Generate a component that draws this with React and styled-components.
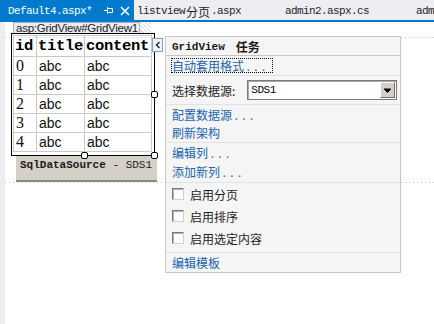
import React from 'react'
import styled, { createGlobalStyle } from 'styled-components'

const GlobalStyle = createGlobalStyle`
  html, body {
    margin: 0;
    padding: 0;
    background: #fff;
  }
  body {
    overflow: hidden;
  }
`;

const cjk = `"Noto Sans CJK SC", "Noto Sans", sans-serif`;
const mono = `"Liberation Mono", "Noto Sans CJK SC", monospace`;

const rows = [0, 1, 2, 3, 4];

const PinIcon = () => (
  <svg width="10" height="9" viewBox="0 0 10 9">
    <path d="M0 4.5h3.5M3.5 1v7M3.5 2.5h5v4h-5" fill="none" stroke="#fff" strokeWidth="1" />
  </svg>
);

const CloseIcon = () => (
  <svg width="10" height="10" viewBox="0 0 10 10">
    <path d="M1 1l8 8M9 1l-8 8" stroke="#fff" strokeWidth="1.6" />
  </svg>
);

const App = () => {
  return (
    <Frame>
      <GlobalStyle />
      <TabBar>
        <Tab $active $w={134} $pad={8}>
          Default4.aspx*
          <TabIcon $ml={12}><PinIcon /></TabIcon>
          <TabIcon $ml={6}><CloseIcon /></TabIcon>
        </Tab>
        <Tab $w={148} $pad={3}>
          listview<Cjk>分页</Cjk>.aspx
        </Tab>
        <Tab $w={128} $pad={3}>admin2.aspx.cs</Tab>
        <Tab $w={40} $pad={6}>admin</Tab>
      </TabBar>

      <Body>
        <Gutter />
        <Canvas>
          <TagRow>
            <TagLabel>asp:GridView#GridView1</TagLabel>
            <Hatch />
          </TagRow>
          <Surface>
            <Control>
              <GridFrame>
                <Table>
                  <colgroup>
                    <col style={{ width: 23 }} />
                    <col style={{ width: 48 }} />
                    <col style={{ width: 67 }} />
                  </colgroup>
                  <thead>
                    <tr>
                      <Th>id</Th>
                      <Th>title</Th>
                      <Th>content</Th>
                    </tr>
                  </thead>
                  <tbody>
                    {rows.map((n) => (
                      <tr key={n}>
                        <Td $num>{n}</Td>
                        <Td>abc</Td>
                        <Td>abc</Td>
                      </tr>
                    ))}
                  </tbody>
                </Table>
              </GridFrame>
              <Handle $x={143} $y={61} />
              <Handle $x={73} $y={122} />
              <Handle $x={143} $y={122} />
              <SmartTag>
                <svg width="6" height="8" viewBox="0 0 6 8">
                  <path d="M4.5 1L1.5 4l3 3" fill="none" stroke="#1e1e1e" strokeWidth="1.3" />
                </svg>
              </SmartTag>
            </Control>
            <DataSource>
              <b>SqlDataSource</b> - SDS1
            </DataSource>
          </Surface>

          <Panel>
            <PanelHeader>
              <b>GridView</b>
              <HeaderCjk>任务</HeaderCjk>
            </PanelHeader>
            <Section $h={20}>
              <Item $h={18}>
                <Focused><Link as="span">自动套用格式<Dots>...</Dots></Link></Focused>
              </Item>
            </Section>
            <Section $h={29} $pt={4}>
              <Item $h={20}>
                <Label>选择数据源:</Label>
                <Select>
                  <SelectText>SDS1</SelectText>
                  <DropButton>
                    <svg width="7" height="5" viewBox="0 0 7 5">
                      <path d="M0 0h7M0.5 1.5h6L3.5 4.5z" fill="#000" stroke="#000" strokeWidth="1" />
                    </svg>
                  </DropButton>
                </Select>
              </Item>
            </Section>
            <Section $h={38}>
              <Item $h={18}><Link>配置数据源<Dots>...</Dots></Link></Item>
              <Item $h={18}><Link>刷新架构</Link></Item>
            </Section>
            <Section $h={40}>
              <Item $h={19}><Link>编辑列<Dots>...</Dots></Link></Item>
              <Item $h={19}><Link>添加新列<Dots>...</Dots></Link></Item>
            </Section>
            <Section $h={70}>
              {['启用分页', '启用排序', '启用选定内容'].map((t) => (
                <Item key={t} $h={22}>
                  <Check />
                  <Label>{t}</Label>
                </Item>
              ))}
            </Section>
            <Section $h={19} $last>
              <Item $h={18}><Link>编辑模板</Link></Item>
            </Section>
          </Panel>
        </Canvas>
      </Body>
    </Frame>
  );
};

export default App;

const Frame = styled.div`
  position: relative;
  width: 434px;
  height: 324px;
  overflow: hidden;
  background: #fff;
  font-family: ${cjk};
`;

const TabBar = styled.div`
  display: flex;
  height: 20px;
  background: #eeeef2;
  border-bottom: 2px solid #007acc;
  font-family: ${mono};
  font-size: 11px;
  letter-spacing: -0.6px;
`;

const Tab = styled.div`
  display: flex;
  align-items: center;
  flex-shrink: 0;
  box-sizing: border-box;
  width: ${(p) => p.$w}px;
  height: 20px;
  padding: 2px 0 0 ${(p) => p.$pad}px;
  white-space: nowrap;
  overflow: hidden;
  color: ${(p) => (p.$active ? '#fff' : '#1e1e1e')};
  background: ${(p) => (p.$active ? '#007acc' : 'transparent')};
`;

const TabIcon = styled.span`
  display: flex;
  margin-left: ${(p) => p.$ml}px;
  margin-top: -1px;
`;

const Cjk = styled.span`
  font-family: ${cjk};
  font-size: 12px;
  letter-spacing: 0;
  margin: 0 1px;
`;

const Body = styled.div`
  display: flex;
  height: 302px;
`;

const Gutter = styled.div`
  width: 5px;
  flex-shrink: 0;
  background: #eeeef2;
`;

const Canvas = styled.div`
  position: relative;
  flex: 1;
  display: flex;
  flex-direction: column;
`;

const TagRow = styled.div`
  display: flex;
  height: 11px;
  margin: 0 0 4px 8px;
`;

const TagLabel = styled.div`
  box-sizing: border-box;
  height: 11px;
  padding: 0 1px 0 2px;
  background: #e9ecf3;
  border: 1px solid #aab3c5;
  border-bottom: none;
  font-family: "Liberation Sans", sans-serif;
  font-size: 11.5px;
  letter-spacing: -0.25px;
  line-height: 10px;
  color: #222;
  white-space: nowrap;
`;

const Hatch = styled.div`
  width: 11px;
  height: 11px;
  background: repeating-linear-gradient(45deg, #fff 0 2px, #d6d6d6 2px 3px);
`;

const Surface = styled.div`
  display: flex;
  flex-direction: column;
  height: 146px;
  box-sizing: border-box;
  background-image:
    linear-gradient(to right, #c4c4c4 1px, transparent 1px),
    linear-gradient(to right, #c4c4c4 1px, transparent 1px);
  background-size: 4px 1px, 4px 1px;
  background-repeat: repeat-x, repeat-x;
  background-position: 0 0, 0 100%;
`;

const Control = styled.div`
  position: relative;
  width: 144px;
  margin: -4px 0 0 6px;
`;

const GridFrame = styled.div`
  box-sizing: border-box;
  height: 123px;
  border: 1px solid #000;
  padding: 1px 2px 2px 1px;
`;

const Table = styled.table`
  table-layout: fixed;
  width: 138px;
  border-collapse: collapse;
`;

const Th = styled.th`
  height: 20px;
  padding: 0 0 0 1px;
  border: 1px solid #c9c9c9;
  text-align: left;
  font-family: "Liberation Mono", monospace;
  font-weight: bold;
  font-size: 15.5px;
  letter-spacing: -0.3px;
  color: #000;
  white-space: nowrap;
  overflow: hidden;
`;

const Td = styled.td`
  height: 18px;
  padding: 0 0 0 2px;
  border: 1px solid #c9c9c9;
  font-family: ${(p) => (p.$num ? '"Liberation Serif", serif' : '"Liberation Sans", sans-serif')};
  font-size: ${(p) => (p.$num ? 16 : 14)}px;
  color: #111;
  line-height: 18px;
`;

const Handle = styled.div`
  position: absolute;
  left: ${(p) => p.$x - 3}px;
  top: ${(p) => p.$y - 3}px;
  width: 5px;
  height: 5px;
  border: 1px solid #000;
  border-radius: 2px;
  background: #fff;
`;

const SmartTag = styled.div`
  position: absolute;
  left: 141px;
  top: 5px;
  box-sizing: border-box;
  width: 11px;
  height: 14px;
  display: flex;
  align-items: center;
  justify-content: center;
  border: 1px solid #7ea4d6;
  background: #eef3fb;
`;

const DataSource = styled.div`
  box-sizing: border-box;
  width: 141px;
  height: 27px;
  margin: -1px 0 0 11px;
  padding: 4px 0 0 4px;
  background: #d4d0c8;
  border-bottom: 2px solid #8c8883;
  font-family: "Liberation Mono", monospace;
  font-size: 11px;
  color: #1a1a1a;
  white-space: nowrap;
`;

const Panel = styled.div`
  position: absolute;
  left: 160px;
  top: 14px;
  box-sizing: border-box;
  width: 236px;
  height: 237px;
  display: flex;
  flex-direction: column;
  background: #f5f5f5;
  border: 1px solid #c9c9c9;
`;

const PanelHeader = styled.div`
  box-sizing: border-box;
  height: 19px;
  display: flex;
  align-items: center;
  padding: 1px 0 0 6px;
  border-bottom: 1px solid #c6c6c6;
  font-family: "Liberation Mono", monospace;
  font-size: 11px;
  color: #1a1a1a;
`;

const HeaderCjk = styled.b`
  margin-left: 11px;
  font-family: ${cjk};
  font-size: 12px;
`;

const Section = styled.div`
  box-sizing: border-box;
  height: ${(p) => p.$h}px;
  flex-shrink: 0;
  display: flex;
  flex-direction: column;
  padding: ${(p) => p.$pt || 0}px 0 0 6px;
  border-bottom: ${(p) => (p.$last ? 'none' : '1px solid #e2e2e2')};
`;

const Item = styled.div`
  display: flex;
  align-items: center;
  height: ${(p) => p.$h}px;
  flex-shrink: 0;
`;

const Link = styled.a`
  font-size: 12px;
  color: #1b63ae;
  text-decoration: none;
  white-space: nowrap;
`;

const Dots = styled.span`
  font-family: "Liberation Mono", monospace;
  font-size: 11px;
  letter-spacing: 1px;
  margin-left: 1px;
`;

const Focused = styled.span`
  display: flex;
  align-items: center;
  height: 13px;
  margin-left: -1px;
  padding: 0 4px 0 0;
  border: 1px dotted #111;
`;

const Label = styled.span`
  font-size: 12px;
  color: #1e1e1e;
  white-space: nowrap;
`;

const Select = styled.div`
  box-sizing: border-box;
  display: flex;
  align-items: center;
  width: 150px;
  height: 20px;
  margin-left: 12px;
  border: 1px solid #7a7a7a;
  box-shadow: inset 1px 1px 0 #a8a8a8;
  background: #fff;
`;

const SelectText = styled.span`
  flex: 1;
  padding-left: 3px;
  font-family: "Liberation Mono", monospace;
  font-size: 11px;
  letter-spacing: -0.5px;
  color: #000;
`;

const DropButton = styled.span`
  box-sizing: border-box;
  display: flex;
  align-items: center;
  justify-content: center;
  width: 15px;
  height: 16px;
  margin-right: 1px;
  background: #d4d0c8;
  border: 1px solid;
  border-color: #fff #6e6e6e #6e6e6e #fff;
`;

const Check = styled.span`
  box-sizing: border-box;
  width: 12px;
  height: 12px;
  margin-right: 6px;
  background: #fff;
  border: 1px solid;
  border-color: #7a7a7a #d0d0d0 #d0d0d0 #7a7a7a;
  box-shadow: inset 1px 1px 0 #b4b4b4;
`;
